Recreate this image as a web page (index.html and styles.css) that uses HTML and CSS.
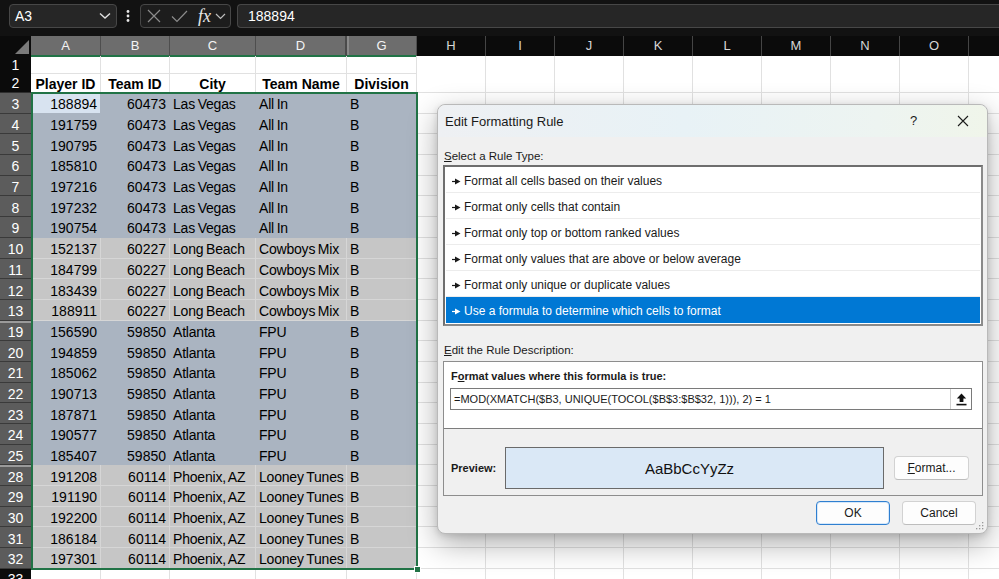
FILE: index.html
```html
<!DOCTYPE html>
<html>
<head>
<meta charset="utf-8">
<link rel="stylesheet" href="styles.css">
</head>
<body>
<div class="fbar">
  <div class="namebox"><span>A3</span>
    <svg class="chev" width="12" height="8" viewBox="0 0 12 8"><path d="M1 1.5 L6 6 L11 1.5" fill="none" stroke="#e0e0e0" stroke-width="1.4"/></svg>
  </div>
  <svg class="vdots" width="4" height="12" viewBox="0 0 4 12"><circle cx="2" cy="1.5" r="1.4" fill="#e8e8e8"/><circle cx="2" cy="6" r="1.4" fill="#e8e8e8"/><circle cx="2" cy="10.5" r="1.4" fill="#e8e8e8"/></svg>
  <div class="fxbox">
    <svg class="ic-x" width="14" height="14" viewBox="0 0 14 14"><path d="M1 1 L13 13 M13 1 L1 13" stroke="#8c8c8c" stroke-width="1.2"/></svg>
    <svg class="ic-check" width="17" height="13" viewBox="0 0 17 13"><path d="M1 6.5 L6 11.5 L16 1" fill="none" stroke="#8c8c8c" stroke-width="1.2"/></svg>
    <span class="fx">fx</span>
    <svg class="chev2" width="11" height="7" viewBox="0 0 11 7"><path d="M1 1 L5.5 5.5 L10 1" fill="none" stroke="#bdbdbd" stroke-width="1.2"/></svg>
  </div>
  <div class="finput">188894</div>
</div>

<div class="colhead">
  <div class="corner"><svg width="31" height="20" viewBox="0 0 31 20"><polygon points="29,4 29,18 15,18" fill="#7a7a7a"/></svg></div>
  <div class="ch sel">A</div>
  <div class="ch sel">B</div>
  <div class="ch sel">C</div>
  <div class="ch sel hid">D</div>
  <div class="ch sel hidl">G</div>
  <div class="ch">H</div>
  <div class="ch">I</div>
  <div class="ch">J</div>
  <div class="ch">K</div>
  <div class="ch">L</div>
  <div class="ch">M</div>
  <div class="ch">N</div>
  <div class="ch">O</div>
  <div class="ch last"></div>
</div>

<div class="grid">
  <div class="r r1"><div class="rh dark">1</div><div class="c"></div><div class="c"></div><div class="c"></div><div class="c"></div><div class="c"></div><div class="rest"></div></div>
  <div class="r r2"><div class="rh dark">2</div><div class="c hd">Player ID</div><div class="c hd">Team ID</div><div class="c hd">City</div><div class="c hd">Team Name</div><div class="c hd">Division</div><div class="rest"></div></div>

  <div class="r blue"><div class="rh">3</div><div class="c n active">188894</div><div class="c n">60473</div><div class="c t">Las Vegas</div><div class="c t">All In</div><div class="c t">B</div><div class="rest"></div></div>
  <div class="r blue"><div class="rh">4</div><div class="c n">191759</div><div class="c n">60473</div><div class="c t">Las Vegas</div><div class="c t">All In</div><div class="c t">B</div><div class="rest"></div></div>
  <div class="r blue"><div class="rh">5</div><div class="c n">190795</div><div class="c n">60473</div><div class="c t">Las Vegas</div><div class="c t">All In</div><div class="c t">B</div><div class="rest"></div></div>
  <div class="r blue"><div class="rh">6</div><div class="c n">185810</div><div class="c n">60473</div><div class="c t">Las Vegas</div><div class="c t">All In</div><div class="c t">B</div><div class="rest"></div></div>
  <div class="r blue"><div class="rh">7</div><div class="c n">197216</div><div class="c n">60473</div><div class="c t">Las Vegas</div><div class="c t">All In</div><div class="c t">B</div><div class="rest"></div></div>
  <div class="r blue"><div class="rh">8</div><div class="c n">197232</div><div class="c n">60473</div><div class="c t">Las Vegas</div><div class="c t">All In</div><div class="c t">B</div><div class="rest"></div></div>
  <div class="r blue"><div class="rh">9</div><div class="c n">190754</div><div class="c n">60473</div><div class="c t">Las Vegas</div><div class="c t">All In</div><div class="c t">B</div><div class="rest"></div></div>

  <div class="r gray"><div class="rh">10</div><div class="c n">152137</div><div class="c n">60227</div><div class="c t">Long Beach</div><div class="c t">Cowboys Mix</div><div class="c t">B</div><div class="rest"></div></div>
  <div class="r gray"><div class="rh">11</div><div class="c n">184799</div><div class="c n">60227</div><div class="c t">Long Beach</div><div class="c t">Cowboys Mix</div><div class="c t">B</div><div class="rest"></div></div>
  <div class="r gray"><div class="rh">12</div><div class="c n">183439</div><div class="c n">60227</div><div class="c t">Long Beach</div><div class="c t">Cowboys Mix</div><div class="c t">B</div><div class="rest"></div></div>
  <div class="r gray"><div class="rh">13</div><div class="c n">188911</div><div class="c n">60227</div><div class="c t">Long Beach</div><div class="c t">Cowboys Mix</div><div class="c t">B</div><div class="rest"></div></div>

  <div class="r blue"><div class="rh gap">19</div><div class="c n">156590</div><div class="c n">59850</div><div class="c t">Atlanta</div><div class="c t">FPU</div><div class="c t">B</div><div class="rest"></div></div>
  <div class="r blue"><div class="rh">20</div><div class="c n">194859</div><div class="c n">59850</div><div class="c t">Atlanta</div><div class="c t">FPU</div><div class="c t">B</div><div class="rest"></div></div>
  <div class="r blue"><div class="rh">21</div><div class="c n">185062</div><div class="c n">59850</div><div class="c t">Atlanta</div><div class="c t">FPU</div><div class="c t">B</div><div class="rest"></div></div>
  <div class="r blue"><div class="rh">22</div><div class="c n">190713</div><div class="c n">59850</div><div class="c t">Atlanta</div><div class="c t">FPU</div><div class="c t">B</div><div class="rest"></div></div>
  <div class="r blue"><div class="rh">23</div><div class="c n">187871</div><div class="c n">59850</div><div class="c t">Atlanta</div><div class="c t">FPU</div><div class="c t">B</div><div class="rest"></div></div>
  <div class="r blue"><div class="rh">24</div><div class="c n">190577</div><div class="c n">59850</div><div class="c t">Atlanta</div><div class="c t">FPU</div><div class="c t">B</div><div class="rest"></div></div>
  <div class="r blue"><div class="rh">25</div><div class="c n">185407</div><div class="c n">59850</div><div class="c t">Atlanta</div><div class="c t">FPU</div><div class="c t">B</div><div class="rest"></div></div>

  <div class="r gray"><div class="rh gap">28</div><div class="c n">191208</div><div class="c n">60114</div><div class="c t">Phoenix, AZ</div><div class="c t">Looney Tunes</div><div class="c t">B</div><div class="rest"></div></div>
  <div class="r gray"><div class="rh">29</div><div class="c n">191190</div><div class="c n">60114</div><div class="c t">Phoenix, AZ</div><div class="c t">Looney Tunes</div><div class="c t">B</div><div class="rest"></div></div>
  <div class="r gray"><div class="rh">30</div><div class="c n">192200</div><div class="c n">60114</div><div class="c t">Phoenix, AZ</div><div class="c t">Looney Tunes</div><div class="c t">B</div><div class="rest"></div></div>
  <div class="r gray"><div class="rh">31</div><div class="c n">186184</div><div class="c n">60114</div><div class="c t">Phoenix, AZ</div><div class="c t">Looney Tunes</div><div class="c t">B</div><div class="rest"></div></div>
  <div class="r gray"><div class="rh">32</div><div class="c n">197301</div><div class="c n">60114</div><div class="c t">Phoenix, AZ</div><div class="c t">Looney Tunes</div><div class="c t">B</div><div class="rest"></div></div>
  <div class="r"><div class="rh dark">33</div><div class="c"></div><div class="c"></div><div class="c"></div><div class="c"></div><div class="c"></div><div class="rest"></div></div>
</div>

<div class="selbox"></div>
<div class="handle"></div>

<div class="dialog">
  <div class="titlebar">
    <span class="title">Edit Formatting Rule</span>
    <span class="help">?</span>
    <svg class="close" width="12" height="12" viewBox="0 0 12 12"><path d="M1 1 L11 11 M11 1 L1 11" stroke="#1b1b1b" stroke-width="1.1"/></svg>
  </div>
  <div class="dbody">
    <div class="lbl"><u>S</u>elect a Rule Type:</div>
    <div class="listbox">
      <div class="item"><svg class="bul" width="9" height="7" viewBox="0 0 9 7"><path d="M0 3.5 H4" stroke="currentColor" stroke-width="1.2"/><path d="M3 0.5 L8.5 3.5 L3 6.5 Z" fill="currentColor"/></svg>Format all cells based on their values</div>
      <div class="item"><svg class="bul" width="9" height="7" viewBox="0 0 9 7"><path d="M0 3.5 H4" stroke="currentColor" stroke-width="1.2"/><path d="M3 0.5 L8.5 3.5 L3 6.5 Z" fill="currentColor"/></svg>Format only cells that contain</div>
      <div class="item"><svg class="bul" width="9" height="7" viewBox="0 0 9 7"><path d="M0 3.5 H4" stroke="currentColor" stroke-width="1.2"/><path d="M3 0.5 L8.5 3.5 L3 6.5 Z" fill="currentColor"/></svg>Format only top or bottom ranked values</div>
      <div class="item"><svg class="bul" width="9" height="7" viewBox="0 0 9 7"><path d="M0 3.5 H4" stroke="currentColor" stroke-width="1.2"/><path d="M3 0.5 L8.5 3.5 L3 6.5 Z" fill="currentColor"/></svg>Format only values that are above or below average</div>
      <div class="item"><svg class="bul" width="9" height="7" viewBox="0 0 9 7"><path d="M0 3.5 H4" stroke="currentColor" stroke-width="1.2"/><path d="M3 0.5 L8.5 3.5 L3 6.5 Z" fill="currentColor"/></svg>Format only unique or duplicate values</div>
      <div class="item on"><svg class="bul" width="9" height="7" viewBox="0 0 9 7"><path d="M0 3.5 H4" stroke="currentColor" stroke-width="1.2"/><path d="M3 0.5 L8.5 3.5 L3 6.5 Z" fill="currentColor"/></svg>Use a formula to determine which cells to format</div>
    </div>
    <div class="lbl lbl2"><u>E</u>dit the Rule Description:</div>
    <div class="descbox">
      <div class="desc-top">
        <div class="blbl">F<u>o</u>rmat values where this formula is true:</div>
        <div class="formula">
          <span class="ftext">=MOD(XMATCH($B3, UNIQUE(TOCOL($B$3:$B$32, 1))), 2) = 1</span>
          <span class="collapse"><svg width="11" height="13" viewBox="0 0 11 13"><path d="M5.5 0.5 L0.8 5.5 H3.6 V9 H7.4 V5.5 H10.2 Z" fill="#111"/><rect x="0.5" y="10.8" width="10" height="1.6" fill="#111"/></svg></span>
        </div>
      </div>
      <div class="desc-bot">
        <span class="plbl">Preview:</span>
        <div class="preview">AaBbCcYyZz</div>
        <div class="btn fmt"><u>F</u>ormat...</div>
      </div>
    </div>
    <div class="btnrow">
      <div class="btn ok">OK</div>
      <div class="btn">Cancel</div>
    </div>
  </div>
  <svg class="grip" width="9" height="9" viewBox="0 0 9 9"><g fill="#9a9a9a"><rect x="7" y="1" width="1.3" height="1.3"/><rect x="4" y="4" width="1.3" height="1.3"/><rect x="7" y="4" width="1.3" height="1.3"/><rect x="1" y="7" width="1.3" height="1.3"/><rect x="4" y="7" width="1.3" height="1.3"/><rect x="7" y="7" width="1.3" height="1.3"/></g></svg>
</div>
</body>
</html>
```

FILE: styles.css
```css
* { box-sizing: border-box; }
html, body { margin: 0; padding: 0; }
body {
  width: 999px;
  height: 579px;
  overflow: hidden;
  position: relative;
  background: #ffffff;
  font-family: "Liberation Sans", Arial, sans-serif;
}

/* formula bar */
.fbar {
  height: 36px;
  background: #121212;
  display: flex;
  align-items: flex-start;
  padding: 4px 0 0 9px;
}
.namebox {
  width: 108px;
  height: 24px;
  border: 1px solid #474747;
  border-radius: 4px;
  background: #262626;
  color: #ffffff;
  font-size: 14px;
  display: flex;
  align-items: center;
  justify-content: space-between;
  padding: 0 5px 0 5px;
}
.vdots { margin: 6px 0 0 9px; }
.fxbox {
  margin-left: 10px;
  width: 91px;
  height: 24px;
  border: 1px solid #474747;
  border-radius: 4px;
  background: #1d1d1d;
  display: flex;
  align-items: center;
  padding-left: 6px;
}
.ic-check { margin-left: 10px; }
.fx {
  margin-left: 10px;
  font-family: "Liberation Serif", "DejaVu Serif", serif;
  font-style: italic;
  font-size: 18px;
  color: #e6e6e6;
  line-height: 20px;
}
.chev2 { margin-left: 4px; }
.finput {
  margin-left: 6px;
  flex: 1;
  height: 24px;
  border: 1px solid #474747;
  border-right: none;
  border-radius: 4px 0 0 4px;
  background: #262626;
  color: #ffffff;
  font-size: 14px;
  line-height: 22px;
  padding-left: 10px;
}

/* column headers */
.colhead {
  display: grid;
  grid-template-columns: 31px 70px 69px 86px 91px 70px repeat(8, 69px) 1fr;
  height: 20px;
  background: #0b0b0b;
}
.r {
  display: grid;
  grid-template-columns: 31px 70px 69px 86px 91px 70px 1fr;
  height: 20.7px;
}
.corner { background: #0b0b0b; border-bottom: 1px solid #555; }
.corner svg { display: block; }
.ch {
  color: #d6d6d6;
  font-size: 13px;
  text-align: center;
  line-height: 20px;
  border-right: 1px solid #454545;
  border-bottom: 1px solid #a8a8a8;
}
.ch.sel {
  background: #6d6d6d;
  color: #f4f4f4;
  border-right: 1px solid #4e4e4e;
  border-bottom: 2px solid #217346;
  line-height: 19px;
}
.ch.hid { border-right: 2px solid #4a4a4a; }
.ch.hidl { box-shadow: inset 2px 0 0 #8a8a8a; }
.ch.last { border-right: none; }

/* rows */
.r1 { height: 17px; }
.r2 { height: 20px; }
.rh {
  background: #5c5c5c;
  color: #ffffff;
  font-size: 14px;
  display: flex;
  align-items: center;
  justify-content: center;
  padding-top: 3px;
  border-bottom: 1px solid #3a3a3a;
}
.rh.dark { background: #0b0b0b; border-bottom: 1px solid #2e2e2e; padding-top: 1px; }
.rh.gap { box-shadow: inset 0 2px 0 #9a9a9a; }
.c {
  border-right: 1px solid #e1e1e1;
  border-bottom: 1px solid #e1e1e1;
  font-size: 14px;
  color: #000;
  display: flex;
  align-items: center;
  padding: 3px 3px 0 3px;
  white-space: nowrap;
  overflow: hidden;
}
.c.n { justify-content: flex-end; }
.c.t { letter-spacing: -0.2px; word-spacing: -1px; }
.c.hd { font-weight: bold; justify-content: center; padding-top: 2px; }
.blue .c { background: #aab4c1; border-color: #aab4c1; }
.gray .c { background: #c6c6c6; border-color: #d6d6d6; }
.c.active { background: #d8e3f0 !important; }
.rest {
  background-color: #fff;
  background-image: repeating-linear-gradient(to right, transparent 0 68px, #e1e1e1 68px 69px);
  border-bottom: 1px solid #e1e1e1;
}

.selbox {
  position: absolute;
  left: 31px;
  top: 92px;
  width: 387px;
  height: 478px;
  border: 2px solid #217346;
  pointer-events: none;
}
.handle {
  position: absolute;
  left: 414px;
  top: 566px;
  width: 7px;
  height: 7px;
  background: #217346;
  border: 1px solid #fff;
}

/* dialog */
.dialog {
  position: absolute;
  left: 437px;
  top: 104px;
  width: 551px;
  height: 430px;
  background: #f0f0f0;
  border: 1px solid #b9b9b9;
  border-radius: 8px;
  box-shadow: 0 10px 30px rgba(0, 0, 0, 0.32), 0 2px 6px rgba(0, 0, 0, 0.12);
  color: #1a1a1a;
  font-family: "Liberation Sans", Arial, sans-serif;
}
.titlebar {
  height: 32px;
  border-radius: 8px 8px 0 0;
  background: linear-gradient(90deg, #eef0f3 0%, #e8f2f6 45%, #edf4f1 80%, #f0f5ea 100%);
  display: flex;
  align-items: center;
  padding-left: 7px;
  position: relative;
}
.title { font-size: 13px; }
.help { position: absolute; left: 472px; top: 8px; font-size: 13px; }
.close { position: absolute; left: 519px; top: 10px; }
.dbody { padding: 0 4px 0 5px; }
.lbl { font-size: 11.5px; line-height: 14px; margin: 12px 0 0 1px; }
.lbl2 { margin-top: 17px; }
.listbox {
  margin-top: 2px;
  height: 161px;
  background: #fff;
  border: 2px solid #8a8a8a;
  border-top-color: #6e6e6e;
  border-left-color: #6e6e6e;
  padding: 0 1px 1px 1px;
}
.item {
  height: 26px;
  font-size: 12px;
  display: flex;
  align-items: center;
  padding: 3px 0 0 6px;
  border-bottom: 1px solid #ececec;
  color: #1a1a1a;
}
.item:last-child { border-bottom: none; }
.item.on { background: #0078d4; color: #fff; height: 25.5px; }
.bul { margin-right: 3px; flex: none; }
.descbox {
  margin-top: 4px;
  height: 135px;
  border: 1px solid #8d8d8d;
  background: #f0f0f0;
}
.desc-top {
  background: #fff;
  height: 67px;
  border-bottom: 1px solid #7d7d7d;
  padding: 7px 10px 0 6px;
}
.blbl { font-size: 11px; font-weight: bold; line-height: 14px; padding-left: 1px; }
.formula {
  margin-top: 5px;
  height: 22px;
  border: 1px solid #7a7a7a;
  background: #fff;
  display: flex;
  align-items: center;
  justify-content: space-between;
  font-size: 11px;
  padding-left: 3px;
}
.ftext { white-space: nowrap; }
.collapse {
  width: 21px;
  height: 20px;
  border-left: 1px solid #cfcfcf;
  display: flex;
  align-items: center;
  justify-content: center;
}
.desc-bot {
  display: flex;
  align-items: flex-start;
  padding: 18px 0 0 7px;
  height: 66px;
}
.plbl { font-size: 11px; font-weight: bold; margin-top: 15px; width: 54px; }
.preview {
  width: 379px;
  height: 42px;
  background: #dae8f6;
  border: 1px solid #6a6a6a;
  display: flex;
  align-items: center;
  justify-content: center;
  font-size: 15px;
  color: #111;
  padding-right: 10px;
}
.btn {
  height: 24px;
  width: 74px;
  border: 1px solid #d2d2d2;
  border-bottom-color: #bdbdbd;
  border-radius: 4px;
  background: #fdfdfd;
  font-size: 12px;
  display: flex;
  align-items: center;
  justify-content: center;
  color: #1a1a1a;
}
.btn.fmt { margin: 9px 0 0 10px; width: 75px; }
.btnrow {
  display: flex;
  justify-content: flex-end;
  gap: 12px;
  margin-top: 5px;
  padding-right: 7px;
}
.btn.ok { border: 1px solid #2f7fd0; box-shadow: inset 0 0 0 1px #d6e8fa; }
.grip { position: absolute; right: 3px; bottom: 3px; }
```
